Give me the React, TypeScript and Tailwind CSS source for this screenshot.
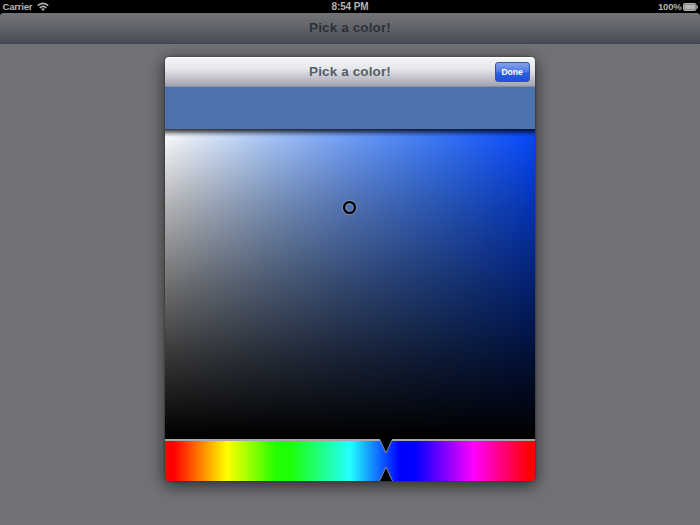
import React from 'react';

function StatusBar() {
  return (
    <div className="grid h-[13px] grid-cols-3 items-center bg-black text-[9.5px] font-bold leading-[13px] text-[#b4b4b4]">
      <div className="flex items-center gap-[5px] pl-[2.5px]">
        <span className="tracking-[-0.2px]">Carrier</span>
        <svg width="12" height="9" viewBox="0 0 12 9" fill="none" stroke="#b4b4b4" strokeWidth="1.7">
          <path d="M0.8 3.7Q6 -1 11.2 3.7" />
          <path d="M2.8 5.9Q6 2.9 9.2 5.9" />
          <path d="M4.2 7Q6 5.7 7.8 7L6 9Z" fill="#b4b4b4" stroke="none" />
        </svg>
      </div>
      <span className="text-center text-[10px] tracking-[-0.1px]">8:54 PM</span>
      <div className="flex items-center justify-end gap-[2px] pr-[1.5px]">
        <span className="tracking-[-0.2px]">100%</span>
        <svg width="15" height="8" viewBox="0 0 15 8">
          <rect x="0.5" y="0.5" width="12.5" height="7" rx="1.5" fill="#6c6c6c" stroke="#b4b4b4" />
          <rect x="1.6" y="1.6" width="10.3" height="4.8" fill="#b4b4b4" />
          <path d="M13.5 2Q15 2.3 15 4T13.5 6Z" fill="#b4b4b4" />
        </svg>
      </div>
    </div>
  );
}

function ColorField() {
  return (
    <div className="relative h-[310px] bg-[linear-gradient(to_bottom,transparent,rgba(0,0,0,0.3)_25%,rgba(0,0,0,0.56)_50%,rgba(0,0,0,0.8)_75%,#000_99%),linear-gradient(to_right,#fff,#a9c8fb_28%,#709ffb_50%,#3a78fb_74%,#0548ff)]">
      <div className="h-[8px] bg-[linear-gradient(to_bottom,rgba(0,0,0,0.78),rgba(0,0,0,0.6)_25%,rgba(0,0,0,0.2)_65%,transparent)]" />
      <svg className="absolute left-[176px] top-[70px]" width="17" height="17" viewBox="0 0 17 17" fill="none">
        <circle cx="8.5" cy="8.5" r="7.1" stroke="#8c9cb8" strokeOpacity="0.7" />
        <circle cx="8.5" cy="8.5" r="5.4" stroke="#000" strokeWidth="2.3" />
        <circle cx="8.5" cy="8.5" r="3.8" stroke="#8c9cb8" strokeOpacity="0.7" />
      </svg>
    </div>
  );
}

function HueBar() {
  return (
    <div className="relative h-[42px] border-t-2 border-[#a6a6ac] bg-[linear-gradient(to_right,#f00_0%,#f00_2.4%,#ff0_16.8%,#2f0_30%,#1eff08_34%,#2ff_50%,#00f_63.5%,#00f_67.6%,#f0f_83.5%,#f00_98.5%)] bg-origin-border">
      <svg className="absolute left-[214px] -top-[2px]" width="14" height="42" viewBox="0 0 14 42" fill="#000" stroke="#999" strokeWidth="0.9">
        <path d="M0.2 -0.5L7 14L13.8 -0.5" />
        <path d="M0.2 42.5L7 28L13.8 42.5" />
      </svg>
    </div>
  );
}

export default function App() {
  return (
    <div className="h-[525px] w-[700px] overflow-hidden bg-black font-['Liberation_Sans',Arial,sans-serif]">
      <StatusBar />
      <div className="flex h-[512px] flex-col items-center overflow-hidden rounded-t-[4px] bg-[#717276]">
        <header className="flex h-[31px] w-full shrink-0 items-center justify-center border-b border-[#43464e] bg-[linear-gradient(to_bottom,#727377,#63656b_45%,#484b55)] pt-[1px] text-[13.5px] font-bold tracking-[0.12px] text-[#2c3036]">
          Pick a color!
        </header>
        <section className="mt-[13px] h-[424px] w-[370px] shrink-0 overflow-hidden rounded-[4px] shadow-[0_4px_16px_1px_rgba(0,0,0,0.6),0_0_2px_rgba(0,0,0,0.6)]">
          <div className="grid h-[30px] grid-cols-[1fr_auto_1fr] items-center border-b border-[#8b8d9c] bg-[linear-gradient(to_bottom,#fff_0%,#f2f3f5_6%,#e7e8ec_40%,#a5a6b4_97%)] px-[5px]">
            <div />
            <h1 className="pt-[2px] text-[13.5px] font-bold tracking-[0.12px] text-[#565d66]">Pick a color!</h1>
            <button className="h-[20px] w-[35px] justify-self-end rounded-[3px] border border-[#3c5396] bg-[linear-gradient(to_bottom,#86a2ea,#4a76e2_50%,#2b5fde_56%,#1f50da)] pr-[1px] text-[8.5px] font-bold leading-[18px] text-white">
              Done
            </button>
          </div>
          <div className="h-[42px] bg-[#4e71b0]" />
          <ColorField />
          <HueBar />
        </section>
      </div>
    </div>
  );
}
